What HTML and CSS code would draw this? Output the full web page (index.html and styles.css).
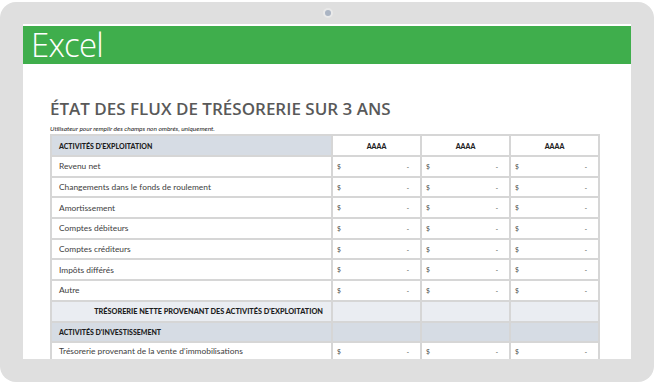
FILE: index.html
```html
<!DOCTYPE html>
<html lang="fr">
<head>
<meta charset="utf-8">
<title>État des flux de trésorerie</title>
<link rel="stylesheet" href="styles.css">
</head>
<body>
<div class="device">
  <div class="bezel-top"><span class="camera"></span></div>
  <div class="screen">
    <div class="brand"><span class="brand-text">Excel</span></div>
    <div class="sheet">
      <h1 class="title">ÉTAT DES FLUX DE TRÉSORERIE SUR 3 ANS</h1>
      <p class="note">Utilisateur pour remplir des champs non ombrés, uniquement.</p>
      <table class="grid">
        <colgroup>
          <col class="c-label"><col class="c-val"><col class="c-val"><col class="c-val">
        </colgroup>
        <tr class="head">
          <th class="section">ACTIVITÉS D'EXPLOITATION</th>
          <th class="year">AAAA</th><th class="year">AAAA</th><th class="year">AAAA</th>
        </tr>
        <tr><td class="label">Revenu net</td><td class="val"><div class="amt"><span>$</span><span>-</span></div></td><td class="val"><div class="amt"><span>$</span><span>-</span></div></td><td class="val"><div class="amt"><span>$</span><span>-</span></div></td></tr>
        <tr><td class="label">Changements dans le fonds de roulement</td><td class="val"><div class="amt"><span>$</span><span>-</span></div></td><td class="val"><div class="amt"><span>$</span><span>-</span></div></td><td class="val"><div class="amt"><span>$</span><span>-</span></div></td></tr>
        <tr><td class="label">Amortissement</td><td class="val"><div class="amt"><span>$</span><span>-</span></div></td><td class="val"><div class="amt"><span>$</span><span>-</span></div></td><td class="val"><div class="amt"><span>$</span><span>-</span></div></td></tr>
        <tr><td class="label">Comptes débiteurs</td><td class="val"><div class="amt"><span>$</span><span>-</span></div></td><td class="val"><div class="amt"><span>$</span><span>-</span></div></td><td class="val"><div class="amt"><span>$</span><span>-</span></div></td></tr>
        <tr><td class="label">Comptes créditeurs</td><td class="val"><div class="amt"><span>$</span><span>-</span></div></td><td class="val"><div class="amt"><span>$</span><span>-</span></div></td><td class="val"><div class="amt"><span>$</span><span>-</span></div></td></tr>
        <tr><td class="label">Impôts différés</td><td class="val"><div class="amt"><span>$</span><span>-</span></div></td><td class="val"><div class="amt"><span>$</span><span>-</span></div></td><td class="val"><div class="amt"><span>$</span><span>-</span></div></td></tr>
        <tr><td class="label">Autre</td><td class="val"><div class="amt"><span>$</span><span>-</span></div></td><td class="val"><div class="amt"><span>$</span><span>-</span></div></td><td class="val"><div class="amt"><span>$</span><span>-</span></div></td></tr>
        <tr class="total"><td class="total-label">TRÉSORERIE NETTE PROVENANT DES ACTIVITÉS D'EXPLOITATION</td><td></td><td></td><td></td></tr>
        <tr class="band"><td class="section">ACTIVITÉS D'INVESTISSEMENT</td><td></td><td></td><td></td></tr>
        <tr class="last"><td class="label">Trésorerie provenant de la vente d’immobilisations</td><td class="val"><div class="amt"><span>$</span><span>-</span></div></td><td class="val"><div class="amt"><span>$</span><span>-</span></div></td><td class="val"><div class="amt"><span>$</span><span>-</span></div></td></tr>
      </table>
    </div>
  </div>
</div>
</body>
</html>
```
FILE: styles.css
```css
html, body {
  margin: 0;
  padding: 0;
  background: #ffffff;
}
body {
  width: 654px;
  height: 385px;
  overflow: hidden;
}
.device {
  margin-top: 2px;
  width: 654px;
  height: 380px;
  background: #dfdfdf;
  border-radius: 16px;
  padding-left: 23px;
  box-sizing: border-box;
}
.bezel-top {
  height: 22px;
  width: 608px;
  display: flex;
  align-items: center;
  justify-content: center;
}
.camera {
  width: 6px;
  height: 6px;
  border-radius: 50%;
  background: #aab4c3;
  border: 2px solid #e9e9e9;
  margin-left: 2px;
}
.screen {
  width: 608px;
  height: 335px;
  background: #ffffff;
  padding-top: 2px;
  box-sizing: border-box;
  overflow: hidden;
}
.brand {
  height: 38px;
  background: #3fae4c;
  display: flex;
  align-items: center;
  padding-left: 8px;
  padding-bottom: 1px;
  box-sizing: border-box;
}
.brand-text {
  color: #ffffff;
  font-family: "Open Sans", sans-serif;
  font-weight: 300;
  font-size: 33px;
  letter-spacing: -0.8px;
  line-height: 1;
}
.sheet {
  padding-left: 27px;
}
.title {
  margin: 35px 0 0 0;
  font-family: "Open Sans", sans-serif;
  font-weight: 600;
  font-size: 17px;
  line-height: 20px;
  color: #595959;
}
.note {
  margin: 4px 0 0 0;
  font-family: "Lato", sans-serif;
  font-style: italic;
  font-size: 6.5px;
  line-height: 11px;
  color: #222222;
}
.grid {
  border-collapse: collapse;
  width: 547px;
  table-layout: fixed;
  font-family: "Lato", sans-serif;
}
.c-label { width: 281px; }
.c-val { width: 89px; }
.grid td, .grid th {
  border: 2px solid #d6d6d6;
  height: 20.7px;
  padding: 0;
  box-sizing: border-box;
}
.grid tr.head th {
  height: 21px;
}
.section {
  background: #d6dce4;
  text-align: left;
  padding-left: 7px !important;
  font-size: 7px;
  font-weight: 900;
  color: #1e1e1e;
}
.year {
  text-align: center;
  font-size: 7px;
  font-weight: 900;
  color: #1e1e1e;
  background: #ffffff;
}
.label {
  padding-left: 7px !important;
  font-size: 8.4px;
  color: #404040;
}
.val {
  padding: 0 11px 0 4px !important;
}
.amt {
  display: flex;
  justify-content: space-between;
  align-items: center;
  font-family: "Open Sans", sans-serif;
  font-size: 7px;
  color: #444444;
}
.total td {
  background: #eaedf2;
}
.total-label {
  text-align: right;
  padding-right: 8px !important;
  font-size: 7.3px;
  font-weight: 900;
  color: #1e1e1e;
}
.band td {
  background: #d6dce4;
}
.grid tr.last td {
  height: 17px;
  border-bottom: none;
}
```
